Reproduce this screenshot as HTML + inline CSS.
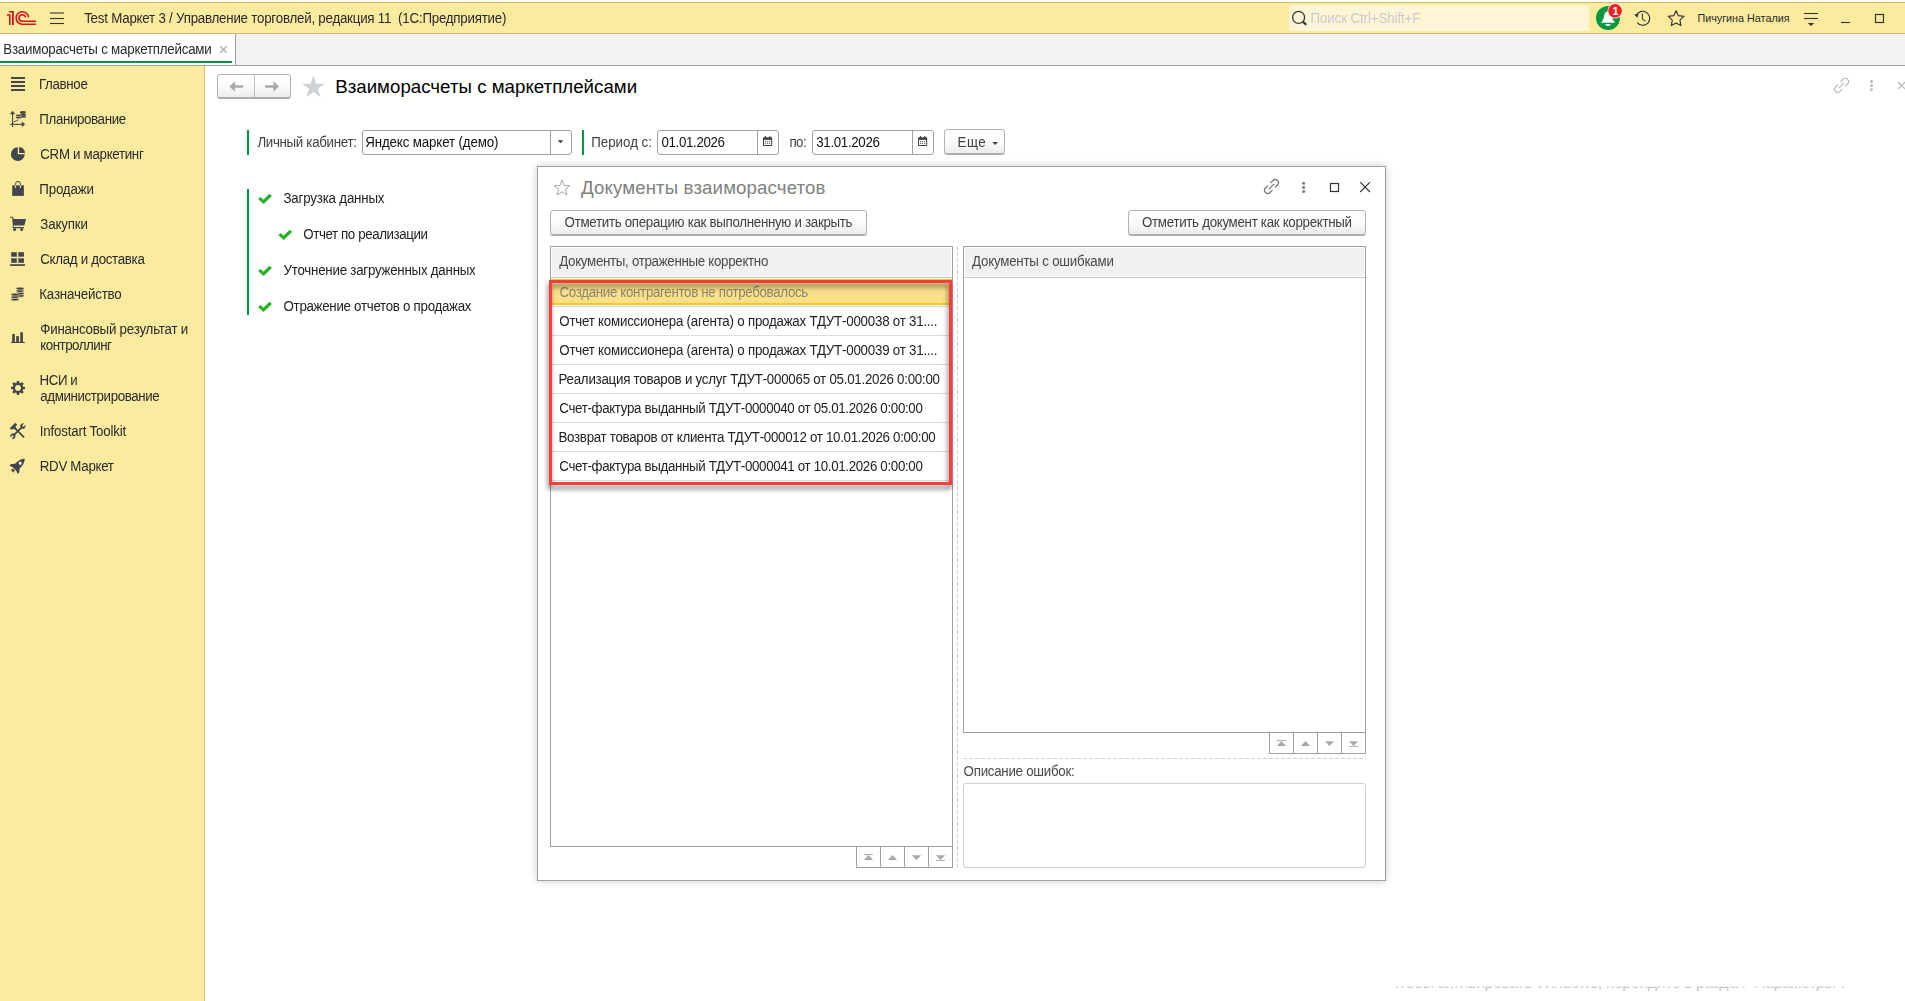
<!DOCTYPE html>
<html lang="ru"><head><meta charset="utf-8"><title>Взаиморасчеты с маркетплейсами</title>
<style>
html,body{margin:0;padding:0;}
body{width:1905px;height:1001px;overflow:hidden;position:relative;background:#fff;font-family:"Liberation Sans",sans-serif;}
.a{position:absolute;box-sizing:border-box;}
.t{position:absolute;white-space:nowrap;font-family:"Liberation Sans",sans-serif;}
svg{position:absolute;overflow:visible;}
#topbar{left:0;top:2px;width:1905px;height:32px;background:#fbeb9f;border-top:1px solid #cdbb6b;border-bottom:1px solid #cdbb6b;}
#search{left:1289px;top:5px;width:300px;height:26px;background:#fdf5d5;border-radius:2px;}
#tabbar{left:0;top:34px;width:1905px;height:32px;background:#f2f2f2;border-bottom:1px solid #a0a0a0;}
#tab{left:0;top:34px;width:236px;height:31px;background:#fff;border-right:1px solid #a0a0a0;}
#tabline{left:0;top:61px;width:232px;height:2px;background:#009646;}
#sidebar{left:0;top:66px;width:205px;height:935px;background:#fbeb9f;border-right:1px solid #cfc283;}
.gbar{background:#009646;width:2px;}
.inp{border:1px solid #a0a0a0;border-radius:3px;background:#fff;}
.vdiv{background:#a0a0a0;width:1px;}
.btn{border:1px solid #b2b2b2;border-radius:3px;background:linear-gradient(#ffffff 0%,#fdfdfd 45%,#ececec 100%);box-shadow:0 1px 0.5px rgba(0,0,0,.34);}
#dialog{left:537px;top:166px;width:849px;height:715px;background:#fff;border:1px solid #a0a0a0;box-shadow:0 0 8px 0 rgba(0,0,0,.2);}
.tbl{border:1px solid #a0a0a0;background:#fff;}
.thead{background:#f1f1f1;}
.rsep{left:551px;width:401px;height:1px;background:#dcdcdc;}
.sbtn{border:1px solid #a0a0a0;background:#fff;width:25px;height:22px;}

</style></head>
<body>
<!-- top bar -->
<div class="a" id="topbar"></div>
<div class="a" id="search"></div>
<div class="a" id="tabbar"></div>
<div class="a" id="tab"></div>
<div class="a" id="tabline"></div>
<div class="a" id="sidebar"></div>
<svg width="1905" height="70" viewBox="0 0 1905 70" style="left:0;top:0;">
<!-- 1C logo -->
<g fill="#d8121c">
<polygon points="7,14.2 10.6,14.2 10.6,25 9,25 9,15.8 7,15.8"/>
<polygon points="9,11 13.8,11 13.8,25 12,25 12,12.6 9,12.6"/>
</g>
<g fill="none" stroke="#d8121c" stroke-width="1.6">
<path d="M28.5,17.3 A6.2,6.2 0 1 0 22.2,24.2 H36"/>
<path d="M25.5,17.3 A3.25,3.25 0 1 0 22.2,21.2 H36"/>
</g>
<!-- hamburger -->
<g stroke="#333" stroke-width="1.1">
<line x1="50" y1="13" x2="64" y2="13"/><line x1="50" y1="18.5" x2="64" y2="18.5"/><line x1="50" y1="23.5" x2="64" y2="23.5"/>
</g>
<!-- tab close -->
<g stroke="#b0b0b0" stroke-width="1.4"><line x1="220.2" y1="46.2" x2="226.8" y2="52.8"/><line x1="226.8" y1="46.2" x2="220.2" y2="52.8"/></g>
<!-- search -->
<circle cx="1298.6" cy="17.4" r="6" fill="none" stroke="#333" stroke-width="1.3"/>
<line x1="1302.8" y1="21.6" x2="1306.3" y2="24.8" stroke="#333" stroke-width="2.2"/>
<!-- bell -->
<circle cx="1608" cy="18" r="12" fill="#0b9641"/>
<path d="M1608,11.2 c-2.6,0 -3.6,2.2 -3.9,4.6 c-0.4,3 -1.2,5 -3.3,6.9 h14.4 c-2.1,-1.9 -2.9,-3.9 -3.3,-6.9 c-0.3,-2.4 -1.3,-4.6 -3.9,-4.6z" fill="#fff"/>
<path d="M1605.3,24 h5.4 a2.7,2 0 0 1 -5.4,0z" fill="#fff"/>
<circle cx="1615.1" cy="10.85" r="7.6" fill="#fff"/>
<circle cx="1615.1" cy="10.85" r="6.9" fill="#f81f22"/>
<!-- history -->
<path d="M1636.3,15.6 A7,7 0 1 1 1637.2,22.6" fill="none" stroke="#333" stroke-width="1.1"/>
<polygon points="1634.2,14.6 1638.6,13.6 1637.4,17.8" fill="#333"/>
<polyline points="1642.4,13.8 1642.4,18.8 1645.4,21.4" fill="none" stroke="#333" stroke-width="1.1"/>
<!-- star -->
<polygon points="1676.10,10.70 1678.45,15.66 1683.90,16.37 1679.90,20.14 1680.92,25.53 1676.10,22.90 1671.28,25.53 1672.30,20.14 1668.30,16.37 1673.75,15.66" fill="none" stroke="#333" stroke-width="1.15" stroke-linejoin="round"/>
<!-- menu -->
<g stroke="#333" stroke-width="1.1"><line x1="1804" y1="13.5" x2="1818" y2="13.5"/><line x1="1804" y1="18.5" x2="1818" y2="18.5"/></g>
<polygon points="1807.8,23 1814.2,23 1811,26" fill="#333"/>
<!-- min / max -->
<line x1="1841" y1="22.5" x2="1850" y2="22.5" stroke="#333" stroke-width="1.1"/>
<rect x="1875.5" y="14.5" width="8" height="8" fill="none" stroke="#333" stroke-width="1.2"/>
</svg>

<svg width="205" height="500" viewBox="0 0 205 500" style="left:0;top:0;">
<g fill="#42454b" stroke="none">
<rect x="11" y="77" width="14" height="2"/>
<rect x="11" y="81" width="14" height="2"/>
<rect x="11" y="85" width="14" height="2"/>
<rect x="11" y="89" width="14" height="2"/>
<rect x="12" y="112.5" width="1.1" height="14.5"/>
<polygon points="12.55,110.8 15.2,114.2 9.9,114.2"/>
<rect x="10" y="123.8" width="13" height="1.1"/>
<polygon points="25.2,124.35 21.8,121.6 21.8,127.1"/>
<polyline points="13.6,122.6 15,120.9 16.2,121.2 17.2,120 18.8,120" fill="none" stroke="#42454b" stroke-width="0.9"/>
<ellipse cx="22.9" cy="112.3" rx="3.1" ry="1.25"/>
<ellipse cx="22.9" cy="114.4" rx="3.1" ry="1.25"/>
<ellipse cx="22.9" cy="116.5" rx="3.1" ry="1.25"/>
<ellipse cx="18.6" cy="115.6" rx="3.0" ry="1.25" stroke="#fbeb9f" stroke-width="0.5"/>
<ellipse cx="18.6" cy="117.6" rx="3.0" ry="1.25" stroke="#fbeb9f" stroke-width="0.5"/>
<path d="M17.8,154.2 L17.8,147.29999999999998 A6.9,6.9 0 1 0 24.700000000000003,154.2 Z"/>
<path d="M19.1,152.89999999999998 L19.1,146.99999999999997 A6.300000000000001,6.300000000000001 0 0 1 25.000000000000004,152.89999999999998 Z"/>
<rect x="12.2" y="185.3" width="11.7" height="10.6"/>
<path d="M15.6,185.3 V184 a2.4,2.6 0 0 1 4.8,0 V185.3" fill="none" stroke="#42454b" stroke-width="1"/>
<path d="M15.6,185.3 V188 M20.4,185.3 V188" fill="none" stroke="#fbeb9f" stroke-width="1"/>
<path d="M10.1,217.3 H12.6 L13.2,219.3" fill="none" stroke="#42454b" stroke-width="1.1"/>
<polygon points="12.2,219 26,219 24.4,225.6 12.9,225.6"/>
<path d="M13,225.6 L13.5,227.6 H24" fill="none" stroke="#42454b" stroke-width="1.1"/>
<circle cx="14.6" cy="229.6" r="1.5"/><circle cx="21.6" cy="229.6" r="1.5"/>
<rect x="11.2" y="252.2" width="5.6" height="4.5"/>
<rect x="11.2" y="258.3" width="5.6" height="4.5"/>
<rect x="18.3" y="252.2" width="5.6" height="4.5"/>
<rect x="18.3" y="258.3" width="5.6" height="4.5"/>
<rect x="10.1" y="264.2" width="14.9" height="1.7"/>
<ellipse cx="20.1" cy="295.80" rx="3.9" ry="1.5" stroke="#fbeb9f" stroke-width="0.6"/>
<ellipse cx="20.1" cy="293.40" rx="3.9" ry="1.5" stroke="#fbeb9f" stroke-width="0.6"/>
<ellipse cx="20.1" cy="291.00" rx="3.9" ry="1.5" stroke="#fbeb9f" stroke-width="0.6"/>
<ellipse cx="20.1" cy="288.60" rx="3.9" ry="1.5" stroke="#fbeb9f" stroke-width="0.6"/>
<ellipse cx="15.0" cy="299.40" rx="3.9" ry="1.5" stroke="#fbeb9f" stroke-width="0.6"/>
<ellipse cx="15.0" cy="297.00" rx="3.9" ry="1.5" stroke="#fbeb9f" stroke-width="0.6"/>
<ellipse cx="15.0" cy="294.60" rx="3.9" ry="1.5" stroke="#fbeb9f" stroke-width="0.6"/>
<rect x="12.2" y="334" width="2.6" height="8.2"/>
<rect x="16.2" y="336.1" width="2.7" height="6.1"/>
<rect x="20.3" y="332.2" width="2.6" height="10"/>
<rect x="11.2" y="341.9" width="13.6" height="1.1"/>
<path fill-rule="evenodd" d="M23.15,386.64 L25.00,386.70 L25.00,389.10 L23.15,389.16 L22.53,390.65 L23.80,392.00 L22.10,393.70 L20.75,392.43 L19.26,393.05 L19.20,394.90 L16.80,394.90 L16.74,393.05 L15.25,392.43 L13.90,393.70 L12.20,392.00 L13.47,390.65 L12.85,389.16 L11.00,389.10 L11.00,386.70 L12.85,386.64 L13.47,385.15 L12.20,383.80 L13.90,382.10 L15.25,383.37 L16.74,382.75 L16.80,380.90 L19.20,380.90 L19.26,382.75 L20.75,383.37 L22.10,382.10 L23.80,383.80 L22.53,385.15 Z M20.9,387.9 A2.9,2.9 0 1 0 15.1,387.9 A2.9,2.9 0 1 0 20.9,387.9 Z"/>
<g transform="translate(17.9,431.1) scale(0.9)">
<g transform="rotate(-45)"><rect x="-7.5" y="-1" width="15" height="2"/><circle cx="-7.9" cy="0" r="2.9"/><circle cx="7.9" cy="0" r="2.9"/><rect x="-11.5" y="-1.05" width="3.9" height="2.1" fill="#fbeb9f"/><rect x="7.6" y="-1.05" width="3.9" height="2.1" fill="#fbeb9f"/></g>
<g transform="rotate(45)"><rect x="-5.5" y="-1" width="15.3" height="2"/><path d="M-8.6,-4.4 h3.2 v7.2 l-1.2,1.4 h-2 z"/><rect x="-5.6" y="-1.6" width="1.6" height="3.2"/></g>
</g>
<g transform="translate(17.7,465.7) rotate(45)">
<path d="M0,-10 C2.4,-7.6 3.5,-4 3.3,0.6 L6.1,4 L5.6,5.7 L2.5,4.6 H-2.5 L-5.6,5.7 L-6.1,4 L-3.3,0.6 C-3.5,-4 -2.4,-7.6 0,-10 Z"/>
<path d="M-1.5,5.4 L-2,8.4 L-0.7,7 L0,9 L0.7,7 L2,8.4 L1.5,5.4 Z"/>
<circle cx="0" cy="-3.6" r="1.5" fill="#fff"/>
</g>
</g></svg>
<!-- page header -->
<div class="a btn" style="left:217px;top:74px;width:74px;height:24px;"></div>
<div class="a" style="left:254px;top:75px;width:1px;height:22px;background:#c0c0c0;"></div>
<!-- form row -->
<div class="a gbar" style="left:247px;top:130px;height:25px;"></div>
<div class="a inp" style="left:362px;top:130px;width:210px;height:25px;"></div>
<div class="a vdiv" style="left:550px;top:131px;height:23px;"></div>
<div class="a gbar" style="left:582px;top:130px;height:25px;"></div>
<div class="a inp" style="left:657px;top:130px;width:122px;height:25px;"></div>
<div class="a vdiv" style="left:757px;top:131px;height:23px;"></div>
<div class="a inp" style="left:812px;top:130px;width:122px;height:25px;"></div>
<div class="a vdiv" style="left:912px;top:131px;height:23px;"></div>
<div class="a btn" style="left:944px;top:129px;width:61px;height:25px;"></div>
<!-- steps -->
<div class="a gbar" style="left:247px;top:189px;height:126px;"></div>
<svg width="1905" height="1001" viewBox="0 0 1905 1001" style="left:0;top:0;">
<g fill="#a9a9a9">
<polygon points="229.4,86.5 234.9,81.3 234.9,85.3 243.1,85.3 243.1,87.7 234.9,87.7 234.9,91.7"/>
<polygon points="279,86.5 273.4,81.3 273.4,85.3 265.2,85.3 265.2,87.7 273.4,87.7 273.4,91.7"/>
</g>
<polygon points="313.40,75.20 316.14,83.63 325.00,83.63 317.83,88.84 320.57,97.27 313.40,92.06 306.23,97.27 308.97,88.84 301.80,83.63 310.66,83.63" fill="#cfd2d5"/>
<g transform="translate(1841.5,85.4) rotate(-45)" fill="none" stroke="#b4b4b4" stroke-width="1.1" stroke-linecap="round"><path d="M-2.2,-3.2 H-5.3 a3.2,3.2 0 0 0 0,6.4 H-2.2"/><path d="M2.2,-3.2 H5.3 a3.2,3.2 0 0 1 0,6.4 H2.2"/><path d="M-3.3,0 H3.3"/></g>
<circle cx="1871.5" cy="81.5" r="1.45" fill="#b4b4b4"/>
<circle cx="1871.5" cy="85.6" r="1.45" fill="#b4b4b4"/>
<circle cx="1871.5" cy="89.6" r="1.45" fill="#b4b4b4"/>
<g stroke="#b4b4b4" stroke-width="1.1"><line x1="1898" y1="82" x2="1905.2" y2="89.2"/><line x1="1905.2" y1="82" x2="1898" y2="89.2"/></g>
<polygon points="557.7,140.2 563.3,140.2 560.5,143.3" fill="#404040"/>
<polygon points="992.2,142 998,142 995.1,145" fill="#404040"/>
<g transform="translate(763,136)"><rect x="0" y="1.2" width="9.2" height="8.8" rx="0.8" fill="#444"/><rect x="1" y="3.9" width="7.2" height="5.1" fill="#fff"/><rect x="1.8" y="0" width="1.3" height="2.2" rx="0.5" fill="#444"/><rect x="6.1" y="0" width="1.3" height="2.2" rx="0.5" fill="#444"/><rect x="1.9" y="4.9" width="1" height="1" fill="#444"/><rect x="4.1" y="4.9" width="1" height="1" fill="#444"/><rect x="6.3" y="4.9" width="1" height="1" fill="#444"/><rect x="1.9" y="6.9" width="1" height="1" fill="#444"/><rect x="4.1" y="6.9" width="1" height="1" fill="#444"/><rect x="6.3" y="6.9" width="1" height="1" fill="#444"/></g>
<g transform="translate(918,136)"><rect x="0" y="1.2" width="9.2" height="8.8" rx="0.8" fill="#444"/><rect x="1" y="3.9" width="7.2" height="5.1" fill="#fff"/><rect x="1.8" y="0" width="1.3" height="2.2" rx="0.5" fill="#444"/><rect x="6.1" y="0" width="1.3" height="2.2" rx="0.5" fill="#444"/><rect x="1.9" y="4.9" width="1" height="1" fill="#444"/><rect x="4.1" y="4.9" width="1" height="1" fill="#444"/><rect x="6.3" y="4.9" width="1" height="1" fill="#444"/><rect x="1.9" y="6.9" width="1" height="1" fill="#444"/><rect x="4.1" y="6.9" width="1" height="1" fill="#444"/><rect x="6.3" y="6.9" width="1" height="1" fill="#444"/></g>
<path d="M258.1,199.0 L260.70000000000005,197.0 L263.3,199.8 L269.5,193.8 L271.90000000000003,196.0 L263.5,204.0 Z" fill="#21b321"/>
<path d="M278.3,235.0 L280.90000000000003,233.0 L283.5,235.8 L289.7,229.8 L292.1,232.0 L283.7,240.0 Z" fill="#21b321"/>
<path d="M258.1,271.0 L260.70000000000005,269.0 L263.3,271.8 L269.5,265.8 L271.90000000000003,268.0 L263.5,276.0 Z" fill="#21b321"/>
<path d="M258.1,307.0 L260.70000000000005,305.0 L263.3,307.8 L269.5,301.8 L271.90000000000003,304.0 L263.5,312.0 Z" fill="#21b321"/>
</svg>
<!-- dialog -->
<div class="a" id="dialog"></div>
<div class="a btn" style="left:550px;top:210px;width:317px;height:25px;"></div>
<div class="a btn" style="left:1128px;top:210px;width:238px;height:25px;"></div>
<!-- left table -->
<div class="a tbl" style="left:550px;top:246px;width:403px;height:601px;"></div>
<div class="a thead" style="left:552px;top:248px;width:399px;height:28px;"></div>
<div class="a" style="left:551px;top:277px;width:401px;height:1px;background:#c6c6c6;"></div>
<div class="a" style="left:551px;top:279px;width:401px;height:26px;background:#fbe08a;border:1px solid #f8c81c;border-bottom-width:2px;"></div>
<div class="a rsep" style="top:306px;"></div>
<div class="a rsep" style="top:335px;"></div>
<div class="a rsep" style="top:364px;"></div>
<div class="a rsep" style="top:393px;"></div>
<div class="a rsep" style="top:422px;"></div>
<div class="a rsep" style="top:451px;"></div>
<div class="a rsep" style="top:480px;"></div>
<!-- right table -->
<div class="a tbl" style="left:963px;top:246px;width:403px;height:487px;"></div>
<div class="a thead" style="left:965px;top:248px;width:399px;height:28px;"></div>
<div class="a" style="left:964px;top:277px;width:401px;height:1px;background:#c6c6c6;"></div>
<!-- dashed separators -->
<div class="a" style="left:957px;top:246px;width:1px;height:622px;background:repeating-linear-gradient(#d2d2d2 0 4px,transparent 4px 6px);"></div>
<div class="a" style="left:963px;top:758px;width:403px;height:1px;background:repeating-linear-gradient(90deg,#d2d2d2 0 4px,transparent 4px 6px);"></div>
<!-- description box -->
<div class="a" style="left:963px;top:783px;width:403px;height:85px;border:1px solid #d0d0d0;border-radius:3px;background:#fff;"></div>
<svg width="1905" height="1001" viewBox="0 0 1905 1001" style="left:0;top:0;">
<polygon points="562.00,180.00 564.06,185.47 569.89,185.74 565.33,189.38 566.88,195.01 562.00,191.80 557.12,195.01 558.67,189.38 554.11,185.74 559.94,185.47" fill="none" stroke="#a8a8a8" stroke-width="1"/>
<g transform="translate(1271.5,186.5) rotate(-45)" fill="none" stroke="#707070" stroke-width="1.15" stroke-linecap="round"><path d="M-2.2,-3.2 H-5.3 a3.2,3.2 0 0 0 0,6.4 H-2.2"/><path d="M2.2,-3.2 H5.3 a3.2,3.2 0 0 1 0,6.4 H2.2"/><path d="M-3.3,0 H3.3"/></g>
<circle cx="1303.6" cy="183.3" r="1.5" fill="#7a7a7a"/>
<circle cx="1303.6" cy="187.5" r="1.5" fill="#7a7a7a"/>
<circle cx="1303.6" cy="191.6" r="1.5" fill="#7a7a7a"/>
<rect x="1330.5" y="183.5" width="8" height="8" fill="none" stroke="#333" stroke-width="1.2"/>
<g stroke="#333" stroke-width="1.1"><line x1="1360.2" y1="182.2" x2="1370" y2="192"/><line x1="1370" y1="182.2" x2="1360.2" y2="192"/></g>
<rect x="856.5" y="846.5" width="24" height="21" fill="#fff" stroke="#a0a0a0" stroke-width="1"/><rect x="864.0" y="854.1" width="9" height="1" fill="#a9a9a9"/><polygon points="863.9,859.9 873.1,859.9 868.5,855.1" fill="#a9a9a9"/><rect x="880.5" y="846.5" width="24" height="21" fill="#fff" stroke="#a0a0a0" stroke-width="1"/><polygon points="887.9,859.9 897.1,859.9 892.5,855.1" fill="#a9a9a9"/><rect x="904.5" y="846.5" width="24" height="21" fill="#fff" stroke="#a0a0a0" stroke-width="1"/><polygon points="911.9,855.3 921.1,855.3 916.5,860.1" fill="#a9a9a9"/><rect x="928.5" y="846.5" width="24" height="21" fill="#fff" stroke="#a0a0a0" stroke-width="1"/><polygon points="935.9,855.3 945.1,855.3 940.5,860.1" fill="#a9a9a9"/><rect x="936.0" y="859.9" width="9" height="1" fill="#a9a9a9"/>
<rect x="1269.5" y="732.5" width="24" height="21" fill="#fff" stroke="#a0a0a0" stroke-width="1"/><rect x="1277.0" y="740.1" width="9" height="1" fill="#a9a9a9"/><polygon points="1276.9,745.9 1286.1,745.9 1281.5,741.1" fill="#a9a9a9"/><rect x="1293.5" y="732.5" width="24" height="21" fill="#fff" stroke="#a0a0a0" stroke-width="1"/><polygon points="1300.9,745.9 1310.1,745.9 1305.5,741.1" fill="#a9a9a9"/><rect x="1317.5" y="732.5" width="24" height="21" fill="#fff" stroke="#a0a0a0" stroke-width="1"/><polygon points="1324.9,741.3 1334.1,741.3 1329.5,746.1" fill="#a9a9a9"/><rect x="1341.5" y="732.5" width="24" height="21" fill="#fff" stroke="#a0a0a0" stroke-width="1"/><polygon points="1348.9,741.3 1358.1,741.3 1353.5,746.1" fill="#a9a9a9"/><rect x="1349.0" y="745.9" width="9" height="1" fill="#a9a9a9"/>
</svg>
<div class="t" style="left:84.20px;top:9.68px;font-size:13.33px;line-height:17px;letter-spacing:-0.230px;color:#2a2a2a;transform:scaleY(1.055);transform-origin:0 13.12px;white-space:pre;">Test Маркет 3 / Управление торговлей, редакция 11  (1С:Предприятие)</div>
<div class="t" style="left:3.30px;top:41.08px;font-size:13.33px;line-height:17px;letter-spacing:-0.227px;color:#2a2a2a;transform:scaleY(1.055);transform-origin:0 13.12px;">Взаиморасчеты с маркетплейсами</div>
<div class="t" style="left:1310.50px;top:9.58px;font-size:13.33px;line-height:17px;letter-spacing:-0.106px;color:#c9c9cb;transform:scaleY(1.055);transform-origin:0 13.12px;">Поиск Ctrl+Shift+F</div>
<div class="t" style="left:1697.40px;top:11.26px;font-size:10.8px;line-height:14px;letter-spacing:-0.012px;color:#2a2a2a;transform:scaleY(1.0);transform-origin:0 10.74px;">Пичугина Наталия</div>
<div class="t" style="left:1612.40px;top:4.09px;font-size:11px;line-height:14px;letter-spacing:-1.200px;color:#fff;transform:scaleY(1.0);transform-origin:0 10.81px;font-weight:bold;">1</div>
<div class="t" style="left:39.00px;top:75.68px;font-size:13.33px;line-height:17px;letter-spacing:-0.352px;color:#2a2a2a;transform:scaleY(1.055);transform-origin:0 13.12px;">Главное</div>
<div class="t" style="left:39.30px;top:110.68px;font-size:13.33px;line-height:17px;letter-spacing:-0.377px;color:#2a2a2a;transform:scaleY(1.055);transform-origin:0 13.12px;">Планирование</div>
<div class="t" style="left:40.30px;top:145.68px;font-size:13.33px;line-height:17px;letter-spacing:-0.318px;color:#2a2a2a;transform:scaleY(1.055);transform-origin:0 13.12px;">CRM и маркетинг</div>
<div class="t" style="left:39.30px;top:180.68px;font-size:13.33px;line-height:17px;letter-spacing:-0.186px;color:#2a2a2a;transform:scaleY(1.055);transform-origin:0 13.12px;">Продажи</div>
<div class="t" style="left:40.30px;top:215.68px;font-size:13.33px;line-height:17px;letter-spacing:-0.176px;color:#2a2a2a;transform:scaleY(1.055);transform-origin:0 13.12px;">Закупки</div>
<div class="t" style="left:40.30px;top:250.68px;font-size:13.33px;line-height:17px;letter-spacing:-0.317px;color:#2a2a2a;transform:scaleY(1.055);transform-origin:0 13.12px;">Склад и доставка</div>
<div class="t" style="left:39.30px;top:285.68px;font-size:13.33px;line-height:17px;letter-spacing:-0.193px;color:#2a2a2a;transform:scaleY(1.055);transform-origin:0 13.12px;">Казначейство</div>
<div class="t" style="left:40.30px;top:320.68px;font-size:13.33px;line-height:17px;letter-spacing:-0.222px;color:#2a2a2a;transform:scaleY(1.055);transform-origin:0 13.12px;">Финансовый результат и</div>
<div class="t" style="left:40.30px;top:336.68px;font-size:13.33px;line-height:17px;letter-spacing:-0.505px;color:#2a2a2a;transform:scaleY(1.055);transform-origin:0 13.12px;">контроллинг</div>
<div class="t" style="left:39.60px;top:371.68px;font-size:13.33px;line-height:17px;letter-spacing:-0.458px;color:#2a2a2a;transform:scaleY(1.055);transform-origin:0 13.12px;">НСИ и</div>
<div class="t" style="left:40.30px;top:387.68px;font-size:13.33px;line-height:17px;letter-spacing:-0.388px;color:#2a2a2a;transform:scaleY(1.055);transform-origin:0 13.12px;">администрирование</div>
<div class="t" style="left:39.80px;top:422.68px;font-size:13.33px;line-height:17px;letter-spacing:-0.183px;color:#2a2a2a;transform:scaleY(1.055);transform-origin:0 13.12px;">Infostart Toolkit</div>
<div class="t" style="left:39.80px;top:457.68px;font-size:13.33px;line-height:17px;letter-spacing:-0.319px;color:#2a2a2a;transform:scaleY(1.055);transform-origin:0 13.12px;">RDV Маркет</div>
<div class="t" style="left:335.20px;top:74.63px;font-size:18.67px;line-height:24px;letter-spacing:0.033px;color:#000;transform:scaleY(1.0);transform-origin:0 18.47px;">Взаиморасчеты с маркетплейсами</div>
<div class="t" style="left:257.40px;top:133.88px;font-size:13.33px;line-height:17px;letter-spacing:-0.320px;color:#404040;transform:scaleY(1.055);transform-origin:0 13.12px;">Личный кабинет:</div>
<div class="t" style="left:365.20px;top:133.88px;font-size:13.33px;line-height:17px;letter-spacing:-0.141px;color:#111;transform:scaleY(1.055);transform-origin:0 13.12px;">Яндекс маркет (демо)</div>
<div class="t" style="left:591.30px;top:133.88px;font-size:13.33px;line-height:17px;letter-spacing:-0.027px;color:#404040;transform:scaleY(1.055);transform-origin:0 13.12px;">Период с:</div>
<div class="t" style="left:661.40px;top:133.88px;font-size:13.33px;line-height:17px;letter-spacing:-0.344px;color:#111;transform:scaleY(1.055);transform-origin:0 13.12px;">01.01.2026</div>
<div class="t" style="left:789.40px;top:133.88px;font-size:13.33px;line-height:17px;letter-spacing:-0.515px;color:#404040;transform:scaleY(1.055);transform-origin:0 13.12px;">по:</div>
<div class="t" style="left:816.30px;top:133.88px;font-size:13.33px;line-height:17px;letter-spacing:-0.344px;color:#111;transform:scaleY(1.055);transform-origin:0 13.12px;">31.01.2026</div>
<div class="t" style="left:957.60px;top:133.88px;font-size:13.33px;line-height:17px;letter-spacing:0.497px;color:#404040;transform:scaleY(1.055);transform-origin:0 13.12px;">Еще</div>
<div class="t" style="left:283.50px;top:189.68px;font-size:13.33px;line-height:17px;letter-spacing:-0.199px;color:#222;transform:scaleY(1.055);transform-origin:0 13.12px;">Загрузка данных</div>
<div class="t" style="left:303.30px;top:225.68px;font-size:13.33px;line-height:17px;letter-spacing:-0.405px;color:#222;transform:scaleY(1.055);transform-origin:0 13.12px;">Отчет по реализации</div>
<div class="t" style="left:283.50px;top:261.68px;font-size:13.33px;line-height:17px;letter-spacing:-0.242px;color:#222;transform:scaleY(1.055);transform-origin:0 13.12px;">Уточнение загруженных данных</div>
<div class="t" style="left:283.50px;top:297.68px;font-size:13.33px;line-height:17px;letter-spacing:-0.293px;color:#222;transform:scaleY(1.055);transform-origin:0 13.12px;">Отражение отчетов о продажах</div>
<div class="t" style="left:581.00px;top:175.83px;font-size:18.67px;line-height:24px;letter-spacing:0.123px;color:#808080;transform:scaleY(1.0);transform-origin:0 18.47px;">Документы взаиморасчетов</div>
<div class="t" style="left:564.60px;top:214.28px;font-size:13.33px;line-height:17px;letter-spacing:-0.306px;color:#404040;transform:scaleY(1.055);transform-origin:0 13.12px;">Отметить операцию как выполненную и закрыть</div>
<div class="t" style="left:1142.00px;top:214.28px;font-size:13.33px;line-height:17px;letter-spacing:-0.305px;color:#404040;transform:scaleY(1.055);transform-origin:0 13.12px;">Отметить документ как корректный</div>
<div class="t" style="left:559.20px;top:253.08px;font-size:13.33px;line-height:17px;letter-spacing:-0.309px;color:#4a4a4a;transform:scaleY(1.055);transform-origin:0 13.12px;">Документы, отраженные корректно</div>
<div class="t" style="left:972.00px;top:253.08px;font-size:13.33px;line-height:17px;letter-spacing:-0.219px;color:#4a4a4a;transform:scaleY(1.055);transform-origin:0 13.12px;">Документы с ошибками</div>
<div class="t" style="left:559.50px;top:283.78px;font-size:13.33px;line-height:17px;letter-spacing:-0.329px;color:#8c8670;transform:scaleY(1.055);transform-origin:0 13.12px;">Создание контрагентов не потребовалось</div>
<div class="t" style="left:559.30px;top:312.68px;font-size:13.33px;line-height:17px;letter-spacing:-0.230px;color:#222;transform:scaleY(1.055);transform-origin:0 13.12px;">Отчет комиссионера (агента) о продажах ТДУТ-000038 от 31....</div>
<div class="t" style="left:559.30px;top:341.68px;font-size:13.33px;line-height:17px;letter-spacing:-0.230px;color:#222;transform:scaleY(1.055);transform-origin:0 13.12px;">Отчет комиссионера (агента) о продажах ТДУТ-000039 от 31....</div>
<div class="t" style="left:558.50px;top:370.68px;font-size:13.33px;line-height:17px;letter-spacing:-0.253px;color:#222;transform:scaleY(1.055);transform-origin:0 13.12px;">Реализация товаров и услуг ТДУТ-000065 от 05.01.2026 0:00:00</div>
<div class="t" style="left:559.30px;top:399.68px;font-size:13.33px;line-height:17px;letter-spacing:-0.340px;color:#222;transform:scaleY(1.055);transform-origin:0 13.12px;">Счет-фактура выданный ТДУТ-0000040 от 05.01.2026 0:00:00</div>
<div class="t" style="left:558.50px;top:428.68px;font-size:13.33px;line-height:17px;letter-spacing:-0.299px;color:#222;transform:scaleY(1.055);transform-origin:0 13.12px;">Возврат товаров от клиента ТДУТ-000012 от 10.01.2026 0:00:00</div>
<div class="t" style="left:559.30px;top:457.68px;font-size:13.33px;line-height:17px;letter-spacing:-0.340px;color:#222;transform:scaleY(1.055);transform-origin:0 13.12px;">Счет-фактура выданный ТДУТ-0000041 от 10.01.2026 0:00:00</div>
<div class="t" style="left:963.60px;top:762.78px;font-size:13.33px;line-height:17px;letter-spacing:-0.270px;color:#4a4a4a;transform:scaleY(1.055);transform-origin:0 13.12px;">Описание ошибок:</div>
<div class="t" style="left:1388.50px;top:971.56px;font-size:16px;line-height:21px;letter-spacing:-0.464px;color:#c4c4c4;transform:scaleY(1.0);transform-origin:0 16.04px;clip-path:inset(15px 0 1px 0);">Чтобы активировать Windows, перейдите в раздел &quot;Параметры&quot;.</div>
<svg width="1905" height="1001" viewBox="0 0 1905 1001" style="left:0;top:0;">
<defs><filter id="rs" x="-5%" y="-10%" width="110%" height="125%"><feGaussianBlur in="SourceAlpha" stdDeviation="2.4"/><feOffset dx="-0.7" dy="3.5" result="b"/><feComponentTransfer><feFuncA type="linear" slope="0.55"/></feComponentTransfer><feMerge><feMergeNode/><feMergeNode in="SourceGraphic"/></feMerge></filter></defs>
<rect x="550.5" y="281.5" width="400" height="202" fill="none" stroke="#fb3b40" stroke-width="3" filter="url(#rs)"/>
</svg>

</body></html>
